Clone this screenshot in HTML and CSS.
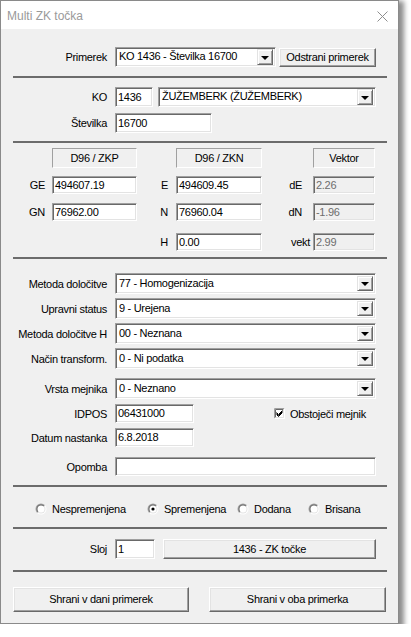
FILE: index.html
```html
<!DOCTYPE html>
<html>
<head>
<meta charset="utf-8">
<title>Multi ZK točka</title>
<link rel="stylesheet" href="styles.css">
</head>
<body>
<div class="window">
  <div class="titlebar">
    <span class="title">Multi ZK točka</span>
    <svg class="close" width="11" height="11" viewBox="0 0 11 11"><path d="M0.5 0.5 L10.5 10.5 M10.5 0.5 L0.5 10.5" stroke="#8e8e8e" stroke-width="1" fill="none"/></svg>
  </div>
  <div class="client">
    <div class="row row-primerek">
      <span class="lbl">Primerek</span>
      <div class="combo combo-primerek"><span class="val">KO 1436 - Številka 16700</span><span class="drop"></span></div>
      <div class="btn btn-odstrani">Odstrani primerek</div>
    </div>
    <div class="sep sep-1"></div>

    <div class="row row-ko">
      <span class="lbl">KO</span>
      <div class="field f-ko">1436</div>
      <div class="combo combo-ko"><span class="val">ŽUŽEMBERK (ŽUŽEMBERK)</span><span class="drop"></span></div>
    </div>
    <div class="row row-stev">
      <span class="lbl">Številka</span>
      <div class="field f-stev">16700</div>
    </div>
    <div class="sep sep-2"></div>

    <div class="crow crow-hdr">
      <span class="hsp1"></span><div class="hbox hb1">D96 / ZKP</div>
      <span class="hsp2"></span><div class="hbox hb2">D96 / ZKN</div>
      <span class="hsp3"></span><div class="hbox hb3">Vektor</div>
    </div>
    <div class="crow crow-ge">
      <span class="cl1">GE</span><div class="field cf1">494607.19</div>
      <span class="cl2">E</span><div class="field cf2">494609.45</div>
      <span class="cl3">dE</span><div class="field dis cf3">2.26</div>
    </div>
    <div class="crow crow-gn">
      <span class="cl1">GN</span><div class="field cf1">76962.00</div>
      <span class="cl2">N</span><div class="field cf2">76960.04</div>
      <span class="cl3">dN</span><div class="field dis cf3">-1.96</div>
    </div>
    <div class="crow crow-h">
      <span class="csp"></span>
      <span class="cl2">H</span><div class="field cf2">0.00</div>
      <span class="cl3 vk">vekt</span><div class="field dis cf3">2.99</div>
    </div>
    <div class="sep sep-3"></div>

    <div class="row crow-combo row-metoda">
      <span class="lbl">Metoda določitve</span>
      <div class="combo combo-wide"><span class="val">77 - Homogenizacija</span><span class="drop"></span></div>
    </div>
    <div class="row crow-combo row-next">
      <span class="lbl">Upravni status</span>
      <div class="combo combo-wide"><span class="val">9 - Urejena</span><span class="drop"></span></div>
    </div>
    <div class="row crow-combo row-next">
      <span class="lbl">Metoda določitve H</span>
      <div class="combo combo-wide"><span class="val">00 - Neznana</span><span class="drop"></span></div>
    </div>
    <div class="row crow-combo row-next">
      <span class="lbl">Način transform.</span>
      <div class="combo combo-wide"><span class="val">0 - Ni podatka</span><span class="drop"></span></div>
    </div>
    <div class="row crow-combo row-vrsta">
      <span class="lbl">Vrsta mejnika</span>
      <div class="combo combo-wide"><span class="val">0 - Neznano</span><span class="drop"></span></div>
    </div>
    <div class="row irow row-idpos">
      <span class="lbl">IDPOS</span>
      <div class="field f-short">06431000</div>
      <label class="check">
        <svg class="cbox" width="11" height="11" viewBox="0 0 11 11">
          <rect x="0" y="0" width="11" height="11" fill="#fff"/>
          <path d="M0.5 10.5 V0.5 H10.5" stroke="#a0a0a0" fill="none"/>
          <path d="M1.5 9.5 V1.5 H9.5" stroke="#696969" fill="none"/>
          <path d="M0.5 10.5 H10.5 V0.5" stroke="#ffffff" fill="none"/>
          <path d="M1.5 9.5 H9.5 V1.5" stroke="#e3e3e3" fill="none"/>
          <path d="M2.5 4.5 L4.5 6.5 L8.5 2.5 M2.5 5.5 L4.5 7.5 L8.5 3.5 M2.5 6.5 L4.5 8.5 L8.5 4.5" stroke="#000" stroke-width="1" fill="none"/>
        </svg>
        <span>Obstoječi mejnik</span>
      </label>
    </div>
    <div class="row irow row-datum">
      <span class="lbl">Datum nastanka</span>
      <div class="field f-short">6.8.2018</div>
    </div>
    <div class="row irow row-opomba">
      <span class="lbl">Opomba</span>
      <div class="field f-wide"></div>
    </div>
    <div class="sep sep-4"></div>

    <div class="radios">
      <div class="radio r1"><svg class="rdot" width="12" height="12" viewBox="0 0 12 12"><use href="#rad"/></svg><span>Nespremenjena</span></div>
      <div class="radio r2"><svg class="rdot" width="12" height="12" viewBox="0 0 12 12"><use href="#rad"/><circle cx="6" cy="6" r="1.6" fill="#000"/></svg><span>Spremenjena</span></div>
      <div class="radio r3"><svg class="rdot" width="12" height="12" viewBox="0 0 12 12"><use href="#rad"/></svg><span>Dodana</span></div>
      <div class="radio r4"><svg class="rdot" width="12" height="12" viewBox="0 0 12 12"><use href="#rad"/></svg><span>Brisana</span></div>
    </div>
    <div class="sep sep-5"></div>

    <div class="row row-sloj">
      <span class="lbl">Sloj</span>
      <div class="field f-sloj">1</div>
      <div class="btn btn-sloj">1436 - ZK točke</div>
    </div>
    <div class="sep sep-6"></div>

    <div class="bottom">
      <div class="btn btn-save1">Shrani v dani primerek</div>
      <div class="btn btn-save2">Shrani v oba primerka</div>
    </div>
  </div>
</div>
<svg width="0" height="0" class="defs">
  <defs>
    <linearGradient id="go" x1="0" y1="0" x2="1" y2="1">
      <stop offset="0.45" stop-color="#a0a0a0"/>
      <stop offset="0.55" stop-color="#ffffff"/>
    </linearGradient>
    <linearGradient id="gi" x1="0" y1="0" x2="1" y2="1">
      <stop offset="0.45" stop-color="#696969"/>
      <stop offset="0.55" stop-color="#e3e3e3"/>
    </linearGradient>
    <g id="rad">
      <circle cx="6" cy="6" r="5.5" fill="url(#go)"/>
      <circle cx="6" cy="6" r="4.5" fill="url(#gi)"/>
      <circle cx="6" cy="6" r="3.5" fill="#fff"/>
    </g>
  </defs>
</svg>
</body>
</html>
```
FILE: styles.css
```css
* { box-sizing: border-box; }
html, body { margin: 0; padding: 0; background: #fff; }
body {
  font-family: "Liberation Sans", Arial, sans-serif;
  font-size: 11px;
  letter-spacing: -0.3px;
  color: #000;
}
.defs { position: absolute; }

.window {
  width: 399px;
  height: 624px;
  border: 1px solid #8a8a8a;
  background: #f0f0f0;
  box-shadow: 3px 3px 5px 2px rgba(0,0,0,0.45);
  display: flex;
  flex-direction: column;
}
.titlebar {
  flex: none;
  height: 28px;
  background: #fff;
  display: flex;
  align-items: center;
  justify-content: space-between;
  padding: 0 10px 0 6px;
}
.title {
  font-size: 12px;
  letter-spacing: 0;
  color: #9a9a9a;
  padding-top: 1px;
}
.close { display: block; margin-top: 2px; }

.client {
  flex: 1;
  padding: 0 11px 0 12px;
}

/* generic rows */
.row { display: flex; align-items: center; }
.lbl {
  flex: none;
  width: 94px;
  margin-right: 8px;
  text-align: right;
  white-space: nowrap;
}

/* sunken edit field */
.field {
  flex: none;
  height: 19px;
  background: #fff;
  border: 1px solid;
  border-color: #a0a0a0 #ffffff #ffffff #a0a0a0;
  box-shadow: inset 1px 1px 0 #696969, inset -1px -1px 0 #e3e3e3;
  padding: 0 0 0 2px;
  line-height: 17px;
  white-space: nowrap;
  overflow: hidden;
}
.field.dis { background: #f0f0f0; color: #6d6d6d; }

/* combo */
.combo {
  flex: none;
  height: 21px;
  background: #fff;
  border: 1px solid;
  border-color: #a0a0a0 #ffffff #ffffff #a0a0a0;
  box-shadow: inset 1px 1px 0 #696969, inset -1px -1px 0 #e3e3e3;
  padding: 2px;
  display: flex;
  align-items: stretch;
}
.combo .val {
  flex: 1;
  padding-left: 1px;
  line-height: 15px;
  white-space: nowrap;
  overflow: hidden;
}
.combo .drop {
  flex: none;
  width: 16px;
  background: #f0f0f0;
  border: 1px solid;
  border-color: #e3e3e3 #696969 #696969 #e3e3e3;
  box-shadow: inset 1px 1px 0 #fff, inset -1px -1px 0 #a0a0a0;
  display: flex;
  align-items: center;
  justify-content: center;
}
.combo .drop::after {
  content: "";
  display: block;
  width: 0;
  height: 0;
  border-left: 4px solid transparent;
  border-right: 4px solid transparent;
  border-top: 4px solid #000;
  margin-top: 1px;
}

/* raised button */
.btn {
  flex: none;
  background: #f0f0f0;
  border: 1px solid;
  border-color: #ffffff #696969 #696969 #ffffff;
  box-shadow: inset -1px -1px 0 #a0a0a0, inset 1px 1px 0 #e3e3e3;
  text-align: center;
  white-space: nowrap;
}

.sep {
  height: 2px;
  background: #6c6c6c;
}

/* row 1 */
.row-primerek { margin-top: 18px; height: 20px; }
.combo-primerek { width: 161px; height: 20px; padding-top: 1px; padding-bottom: 1px; }
.btn-odstrani { width: 97px; height: 19px; margin-left: 3px; line-height: 17px; }
.sep-1 { margin-top: 9px; }

.row-ko { margin-top: 9px; height: 20px; }
.f-ko { width: 38px; height: 20px; line-height: 18px; }
.combo-ko { width: 218px; height: 20px; margin-left: 5px; padding-top: 1px; padding-bottom: 1px; }
.row-stev { margin-top: 6px; height: 20px; }
.f-stev { width: 97px; height: 20px; line-height: 18px; }
.sep-2 { margin-top: 8px; }

/* coordinates */
.crow { display: flex; align-items: center; }
.crow-hdr { margin-top: 5px; height: 20px; }
.hsp1 { width: 39px; flex: none; }
.hsp2 { width: 39px; flex: none; }
.hsp3 { width: 51px; flex: none; }
.hbox {
  flex: none;
  height: 20px;
  border: 1px solid;
  border-color: #a0a0a0 #ffffff #ffffff #a0a0a0;
  text-align: center;
  line-height: 18px;
}
.hb1 { width: 85px; }
.hb2 { width: 86px; }
.hb3 { width: 62px; }

.cl1, .cl2, .cl3 { flex: none; text-align: right; white-space: nowrap; }
.cl1 { width: 32px; margin-right: 7px; }
.cl2 { width: 31px; margin-right: 8px; }
.cl3 { width: 40px; margin-right: 11px; }
.cl3.vk { width: 48px; margin-right: 3px; }
.csp { flex: none; width: 124px; }
.cf1 { width: 85px; height: 18px; line-height: 16px; }
.cf2 { width: 86px; height: 18px; line-height: 16px; }
.cf3 { width: 62px; height: 18px; line-height: 16px; }
.crow-ge { margin-top: 8px; height: 18px; }
.crow-gn { margin-top: 9px; height: 18px; }
.crow-h { margin-top: 12px; height: 18px; }
.sep-3 { margin-top: 6px; }

/* combo rows */
.crow-combo { height: 21px; }
.combo-wide { width: 261px; }
.row-metoda { margin-top: 14px; }
.row-next { margin-top: 4px; }
.row-vrsta { margin-top: 9px; }

.irow { height: 19px; }
.row-idpos { margin-top: 5px; }
.row-datum { margin-top: 5px; }
.row-opomba { margin-top: 10px; }
.f-short { width: 79px; }
.f-wide { width: 261px; }
.check { display: flex; align-items: center; margin-left: 80px; }
.cbox { display: block; margin-right: 5px; }
.sep-4 { margin-top: 9px; }

/* radios */
.radios { display: flex; align-items: center; margin-top: 15px; height: 13px; padding-left: 22px; }
.radio { display: flex; align-items: center; flex: none; }
.rdot { display: block; margin-right: 5px; }
.r1 { width: 112px; }
.r2 { width: 90px; }
.r3 { width: 71px; }
.sep-5 { margin-top: 12px; }

.row-sloj { margin-top: 10px; height: 20px; }
.f-sloj { width: 40px; height: 20px; line-height: 18px; }
.btn-sloj { width: 213px; height: 20px; margin-left: 8px; line-height: 18px; }
.sep-6 { margin-top: 11px; }

.bottom { display: flex; margin-top: 15px; }
.btn-save1 { width: 176px; height: 25px; line-height: 23px; }
.btn-save2 { width: 177px; height: 25px; line-height: 23px; margin-left: 20px; }
```
